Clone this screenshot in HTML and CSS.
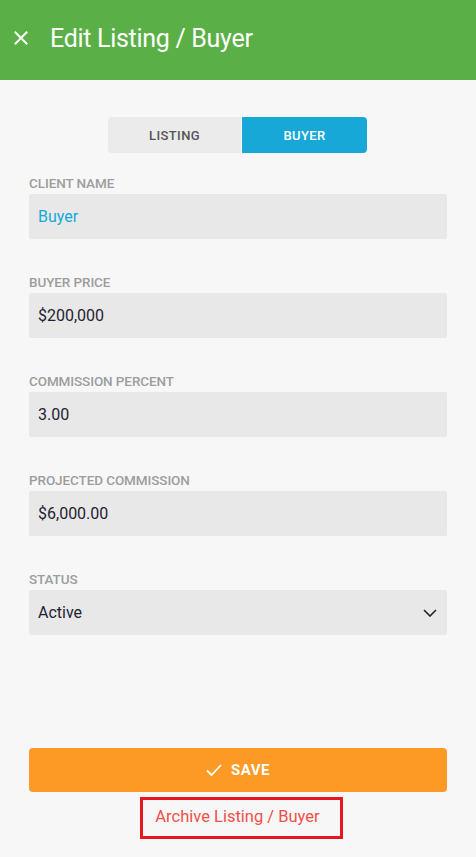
FILE: index.html
```html
<!DOCTYPE html>
<html>
<head>
<meta charset="utf-8">
<link rel="stylesheet" href="styles.css">
</head>
<body>
<div class="app">
  <header class="topbar">
    <svg class="close" viewBox="0 0 14 14" width="14" height="14"><path d="M1.5 1.5L12.5 12.5M12.5 1.5L1.5 12.5" stroke="#fff" stroke-width="2" stroke-linecap="square"/></svg>
    <h1 class="title">Edit Listing / Buyer</h1>
  </header>
  <main class="content">
    <div class="tabs">
      <div class="tab listing">LISTING</div>
      <div class="tab active">BUYER</div>
    </div>
    <div class="field">
      <div class="label">CLIENT NAME</div>
      <div class="input name">Buyer</div>
    </div>
    <div class="field">
      <div class="label">BUYER PRICE</div>
      <div class="input num">$200,000</div>
    </div>
    <div class="field">
      <div class="label">COMMISSION PERCENT</div>
      <div class="input num">3.00</div>
    </div>
    <div class="field">
      <div class="label">PROJECTED COMMISSION</div>
      <div class="input num">$6,000.00</div>
    </div>
    <div class="field">
      <div class="label">STATUS</div>
      <div class="input select"><span>Active</span>
        <svg viewBox="0 0 14 8" width="14" height="8"><path d="M1 1L7 7L13 1" fill="none" stroke="#222" stroke-width="1.6"/></svg>
      </div>
    </div>
    <div class="spacer"></div>
    <button class="save"><svg viewBox="0 0 16 12" width="16" height="12"><path d="M1 6.5L5.5 11L15 1" fill="none" stroke="#fff" stroke-width="1.8"/></svg><span>SAVE</span></button>
    <div class="archive-wrap"><a class="archive">Archive Listing / Buyer</a></div>
  </main>
</div>
</body>
</html>
```
FILE: styles.css
```css
* { box-sizing: border-box; }
html, body { margin: 0; padding: 0; }
body { background: #f7f7f7; font-family: Roboto, "Liberation Sans", sans-serif; width: 476px; height: 857px; overflow: hidden; }
.app { display: flex; flex-direction: column; height: 857px; }
.topbar { height: 80px; background: #5aaf47; display: flex; align-items: center; padding-left: 14px; }
.close { flex: none; margin-top: -4px; }
.title { margin: 0 0 0 22px; font-weight: 400; font-size: 25px; color: #fff; letter-spacing: -0.3px; margin-top: -4px; }
.content { flex: 1; display: flex; flex-direction: column; padding: 37px 29px 18px 29px; }
.tabs { align-self: center; display: flex; gap: 1px; height: 36px; margin-left: -1px; }
.tab { display: flex; align-items: center; justify-content: center; background: #ebebeb; color: #555; font-size: 13px; font-weight: 500; letter-spacing: 0.4px; }
.tab.listing { width: 133px; border-radius: 4px 0 0 4px; }
.tab.active { width: 125px; background: #17a8d8; color: #fff; border-radius: 0 4px 4px 0; }
.field { margin-top: 22px; display: flex; flex-direction: column; }
.field + .field { margin-top: 35px; }
.label { font-size: 13.5px; font-weight: 500; color: #9d9d9d; letter-spacing: -0.1px; line-height: 16px; margin-bottom: 3px; }
.input { height: 45px; background: #e8e8e8; border-radius: 2px; display: flex; align-items: center; padding-left: 9px; font-size: 16px; color: #1e2330; }
.input.name { color: #17a8d8; }
.select { justify-content: space-between; padding-right: 10px; }
.spacer { flex: 1; }
.save { height: 44px; border: 0; border-radius: 4px; background: #fd9a25; color: #fff; display: flex; align-items: center; justify-content: center; gap: 9px; font-family: inherit; font-size: 15px; font-weight: 700; letter-spacing: 0.5px; padding: 0; }
.archive-wrap { display: flex; justify-content: center; margin-top: 5px; }
.archive { display: block; border: 3px solid #e8161e; padding: 7px 20px 9px 12px; margin-left: 7px; font-size: 16.5px; color: #f0504a; line-height: 20px; }
```
